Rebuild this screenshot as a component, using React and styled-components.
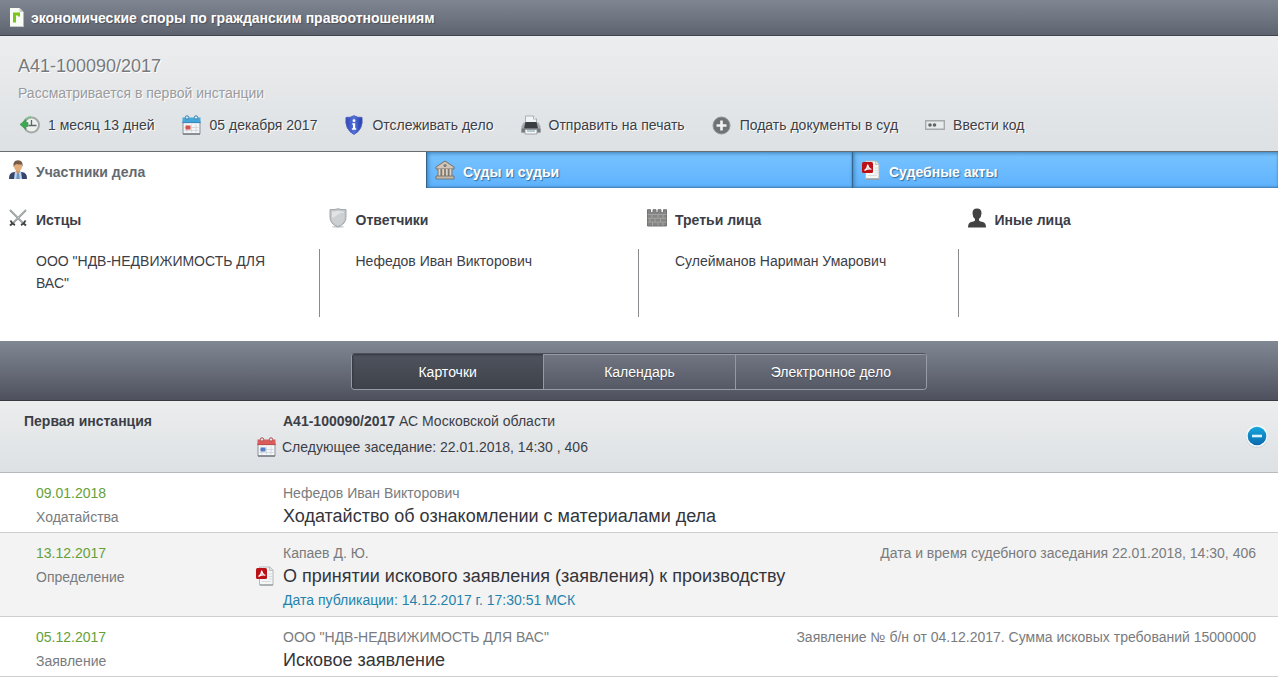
import React from "react";
import styled, { createGlobalStyle, css } from "styled-components";

const GlobalStyle = createGlobalStyle`
  *, *::before, *::after { box-sizing: border-box; }
  body {
    margin: 0;
    background: #fff;
    color: #3b3e47;
    font: 14px/20px Arial, "Liberation Sans", sans-serif;
  }
  h1, h2, h3, p, ul { margin: 0; padding: 0; font-size: inherit; }
  ul { list-style: none; }
  button { font: inherit; color: inherit; background: none; border: 0; padding: 0; cursor: pointer; }
  a { color: inherit; text-decoration: none; }
  svg { display: block; flex: none; }
`;

/* ---------- icons ---------- */

const CaseIcon = () => (
  <svg width="14" height="19" viewBox="0 0 14 19" aria-hidden="true">
    <path d="M0 0h9.500l4 4v15h-13.500z" fill="#f7fbf3" />
    <path d="M9.500 0l4 4h-4z" fill="#c3cdbd" />
    <path d="M0 18h13.500v1h-13.500z" fill="#c6c9cc" />
    <path d="M3 4.500h7v4h-2v-1h-2v7h-3z" fill="#7ac51d" />
  </svg>
);

const ClockIcon = () => (
  <svg width="20" height="20" viewBox="0 0 20 20" aria-hidden="true">
    <circle cx="11.500" cy="10" r="7.500" fill="#eef0ef" stroke="#a3aba7" strokeWidth="2" />
    <path d="M11.500 5v5.500h5M8.500 10.500h3" fill="none" stroke="#5d666a" strokeWidth="1.300" />
    <path d="M4 7q2-4.500 7-5" fill="none" stroke="#8bbd92" strokeWidth="2" />
    <path d="M0 9.500l6-5v3h2v4h-2v3z" fill="#3fa951" stroke="#2f9043" strokeWidth="0.600" />
  </svg>
);

const CalendarIcon = ({ head, dark, mark }) => (
  <svg width="19" height="20" viewBox="0 0 19 20" aria-hidden="true">
    <path d="M1 6h17v13h-17z" fill="#f4f6f7" stroke="#8d9296" />
    <path d="M.5 2.500h18v5.500h-18z" fill={head} />
    <path d="M.5 7.300h18v.8h-18z" fill={dark} />
    <path d="M5 9.500v8M9.500 9.500v8M14 9.500v8M2.500 12.500h14M2.500 15.500h14" stroke="#ccd4da" strokeWidth="0.800" />
    <path d="M3.500 10.500h5v4h-5z" fill={mark} />
    <circle cx="5" cy="2.500" r="1.700" fill="#e4e9ec" stroke={dark} />
    <circle cx="14" cy="2.500" r="1.700" fill="#e4e9ec" stroke={dark} />
    <path d="M1 19h17" stroke="#697077" strokeWidth="1.200" />
  </svg>
);

const InfoShieldIcon = () => (
  <svg width="20" height="20" viewBox="0 0 20 20" aria-hidden="true">
    <defs>
      <linearGradient id="shieldBlue" x2="1">
        <stop offset="0" stopColor="#2f45b5" />
        <stop offset=".5" stopColor="#5573dc" />
        <stop offset="1" stopColor="#2339a8" />
      </linearGradient>
    </defs>
    <path d="M10 .7q3.500 2.300 8 1.700q1.500 12-8 17q-9.500-5-8-17q4.500.6 8-1.700z" fill="url(#shieldBlue)" stroke="#4a60bb" />
    <circle cx="10" cy="5.700" r="1.400" fill="#fff" />
    <path d="M8.300 8.300h2.900v5h1v1.400h-4.300v-1.400h1.100v-3.600h-.7z" fill="#fff" />
  </svg>
);

const PrinterIcon = () => (
  <svg width="20" height="20" viewBox="0 0 20 20" aria-hidden="true">
    <path d="M4.500 8v-7h8l3 3v4z" fill="#f2f4f5" stroke="#9ba2a8" strokeWidth="0.800" />
    <path d="M12.500 1v3h3" fill="#fff" stroke="#9ba2a8" strokeWidth="0.800" />
    <path d="M2.500 7.500h15l2 4v6h-19v-6z" fill="#a4a8ac" />
    <path d="M4.500 7h11l1.500 6.500h-14z" fill="#3b3e42" />
    <path d="M.5 13.500h19v4h-19z" fill="#777b7f" />
    <path d="M4 14.500h12v4.500h-12z" fill="#f5f7f8" stroke="#8d959b" strokeWidth="0.800" />
    <path d="M6 16h8" stroke="#7c9aac" />
  </svg>
);

const PlusIcon = () => (
  <svg width="19" height="19" viewBox="0 0 19 19" aria-hidden="true">
    <circle cx="9.500" cy="9.500" r="8.500" fill="#6f7275" stroke="#919497" />
    <path d="M9.500 4.500v10M4.500 9.500h10" stroke="#f1f2f3" strokeWidth="2.600" />
  </svg>
);

const CodeIcon = () => (
  <svg width="20" height="10" viewBox="0 0 20 10" aria-hidden="true">
    <path d="M.7.700h18.600v8.600h-18.600z" fill="#e8ebec" stroke="#a6aaac" strokeWidth="1.400" />
    <circle cx="5" cy="5" r="1.800" fill="#606467" />
    <circle cx="9.500" cy="5" r="1.800" fill="#606467" />
  </svg>
);

const ManagerIcon = () => (
  <svg width="20" height="20" viewBox="0 0 20 20" aria-hidden="true">
    <path d="M1 19q-.5-6 5-7h8q5.500 1 5 7z" fill="#38456b" />
    <path d="M7 11h6l1 8h-8z" fill="#bdd5ed" />
    <path d="M9.200 12h1.600l1 7h-3.600z" fill="#6f94bd" />
    <path d="M8 9h4v3l-2 1.500l-2-1.500z" fill="#d09466" />
    <ellipse cx="10" cy="6.500" rx="4" ry="4.700" fill="#e2ac7b" />
    <path d="M5.500 7q-1-6.500 4.500-6.700q5.500.2 4.500 6.700l-1-2.500q-3.500 0-5-.5q-2 .5-3 3z" fill="#755a48" />
  </svg>
);

const CourtIcon = () => (
  <svg width="20" height="20" viewBox="0 0 20 20" aria-hidden="true">
    <path d="M10 1l9 6v2h-18v-2z" fill="#d0c7ba" stroke="#776f66" />
    <circle cx="10" cy="5.500" r="1.500" fill="#80776d" />
    <path d="M2.500 9h15v7h-15z" fill="#81776d" />
    <path d="M4.500 9v7M8.200 9v7M11.800 9v7M15.500 9v7" stroke="#ded6ca" strokeWidth="1.800" />
    <path d="M1 16h18v3h-18z" fill="#c3b9ac" stroke="#70695f" strokeWidth="0.800" />
  </svg>
);

const PdfIcon = () => (
  <svg width="18" height="20" viewBox="0 0 18 20" aria-hidden="true">
    <path d="M3.500 1h10.500l3 3v15h-13.500z" fill="#f4f5f5" stroke="#b4babd" />
    <path d="M13.500 1v3.500h3.500" fill="#dbe5df" stroke="#b4babd" strokeWidth="0.800" />
    <path d="M4 19h13" stroke="#868c90" />
    <path d="M6 15.500h9M13 8h3M13 10.500h3M13 13h3" stroke="#d8dcde" />
    <rect x="0" y="2" width="11" height="11" rx="1.500" fill="#bb1117" />
    <path d="M2.500 10.500q3-2 3.200-6q1 4.300 3.800 4.700q-3.500-.7-7 1.300z" fill="#f0b9bb" stroke="#fff" strokeWidth="1.100" />
  </svg>
);

const SwordsIcon = () => (
  <svg width="18" height="18" viewBox="0 0 18 18" aria-hidden="true">
    <path d="M1 1l13 13M17 1l-13 13" stroke="#8f9496" strokeWidth="2" />
    <path d="M1.500 1l12 12M16.500 1l-12 12" stroke="#d3d7d8" strokeWidth="0.700" />
    <path d="M1.500 11.500q1.200 3 4.500 4.500M16.500 11.500q-1.200 3-4.500 4.500M4 14l-3 2.500M14 14l3 2.500" fill="none" stroke="#404446" strokeWidth="2" />
  </svg>
);

const ShieldIcon = () => (
  <svg width="20" height="20" viewBox="0 0 20 20" aria-hidden="true">
    <ellipse cx="10" cy="18.700" rx="6" ry="1" fill="#d1d2d3" />
    <path d="M10 .8q4 1.200 8 .8v7.400q0 7-8 10q-8-3-8-10v-7.400q4 .4 8-.8z" fill="#c6c9cc" stroke="#a2a5a8" />
    <path d="M10 2.800q3 1 6 .7v5.200q0 5.500-6 8q-6-2.500-6-8v-5.200q3 .3 6-.7z" fill="#e1e3e5" />
    <path d="M4 10q3-1 6-3.500t6-1.500v4q0 5.500-6 7.800q-5-2-6-6.800z" fill="#cdd0d3" />
  </svg>
);

const WallIcon = () => (
  <svg width="20" height="18" viewBox="0 0 20 18" aria-hidden="true">
    <path d="M.5.700h3v3h2.500v-3h3v3h2v-3h3v3h2.500v-3h3v16.300h-19z" fill="#868685" stroke="#737373" />
    <path d="M.5 5.500h19M.5 9.300h19M.5 13.100h19M5 5.500v3.800M11 5.500v3.800M16 5.500v3.800M3 9.300v3.800M8 9.300v3.800M13.500 9.300v3.800M5.500 13.100v3.700M11 13.100v3.700M16 13.100v3.700" stroke="#aaaaa9" strokeWidth="0.800" />
  </svg>
);

const PersonIcon = () => (
  <svg width="18" height="20" viewBox="0 0 18 20" aria-hidden="true">
    <path d="M9 .5q4.700 0 4.500 5q-.2 4-2.500 5.500v1.500q1 1 4 1.500q3 .8 3 5.500h-18q0-4.700 3-5.500q3-.5 4-1.500v-1.500q-2.300-1.500-2.500-5.500q-.2-5 4.500-5z" fill="#424242" />
  </svg>
);

const MinusIcon = () => (
  <svg width="24" height="24" viewBox="0 0 24 24" aria-hidden="true">
    <defs>
      <linearGradient id="minusBlue" x2="0" y2="1">
        <stop offset="0" stopColor="#17a7dc" />
        <stop offset="1" stopColor="#0869ae" />
      </linearGradient>
    </defs>
    <circle cx="12" cy="12.800" r="11" fill="#c9ced3" />
    <circle cx="12" cy="12" r="10.800" fill="#f3f9fc" />
    <circle cx="12" cy="12" r="9.300" fill="url(#minusBlue)" />
    <path d="M7 10.700h10v2.600h-10z" fill="#d9f4ff" />
  </svg>
);

/* ---------- layout ---------- */

const panel = css`
  background: linear-gradient(#ecedee, #dde1e4);
`;

const TitleBar = styled.header`
  display: flex;
  align-items: center;
  gap: 7px;
  min-height: 36px;
  padding: 0 10px;
  border-bottom: 1px solid #40434c;
  background: linear-gradient(#808691, #5d6470);
  color: #fff;
  font-weight: bold;
  text-shadow: 1px 1px 1px #4a4e58;
`;

const CaseInfo = styled.section`
  ${panel}
  padding: 18px 18px 16px;
  border-bottom: 1px solid #686c70;
  text-shadow: 1px 1px 0 #fff;
`;

const CaseNumber = styled.h1`
  color: #777a7d;
  font-size: 18px;
  font-weight: normal;
  line-height: 24px;
`;

const CaseStatus = styled.p`
  margin-top: 5px;
  color: #999b9e;
`;

const Toolbar = styled.div`
  display: flex;
  flex-wrap: wrap;
  gap: 8px 27px;
  margin-top: 12px;
  padding-left: 2px;
`;

const ToolButton = styled.button`
  display: flex;
  align-items: center;
  gap: 8px;
  height: 20px;
  text-shadow: inherit;
  white-space: nowrap;
`;

const IconBox = styled.span`
  display: flex;
  justify-content: center;
  width: 20px;
`;

const Tabs = styled.div`
  display: grid;
  grid-template-columns: repeat(3, 1fr);
`;

const Tab = styled.button`
  display: flex;
  align-items: center;
  gap: 8px;
  height: 36px;
  padding: 0 8px 0 9px;
  font-weight: bold;
  text-align: left;
  ${({ $active }) =>
    $active
      ? css`
          padding-left: 8px;
          background: #fff;
          color: #646971;
        `
      : css`
          background: linear-gradient(#79c3ff, #5eb2fd);
          box-shadow: inset 1px 0 0 #32658e, inset 2px 1px 4px #397cb2, inset 0 -1px 2px #4182b8;
          color: #fff;
          text-shadow: 1px 1px 1px #356d9c;
        `}
`;

const Label = styled.span`
  padding-top: 4px;
`;

const Parties = styled.section`
  display: grid;
  grid-template-columns: repeat(4, 1fr);
  padding: 20px 0 24px;
`;

const Party = styled.div`
  display: flex;
  flex-direction: column;
`;

const PartyHeading = styled.h2`
  display: flex;
  align-items: center;
  gap: 8px;
  height: 20px;
  margin-bottom: 21px;
  padding-left: 8px;
`;

const PartyNames = styled.ul`
  flex: 1;
  min-height: 68px;
  padding: 1px 36px 0;
  line-height: 22px;
  ${Party}:not(:last-child) > & { border-right: 1px solid #8a8b8f; }
`;

const ViewBar = styled.nav`
  display: flex;
  justify-content: center;
  padding: 12px 0 10px;
  border-bottom: 1px solid #393943;
  background: linear-gradient(#808894, #4e515d);
`;

const Segments = styled.div`
  display: grid;
  grid-template-columns: repeat(3, 1fr);
  width: 576px;
  max-width: 100%;
  height: 37px;
  border: 1px solid #969ba6;
  border-top-color: #4c505a;
  border-radius: 4px;
  overflow: hidden;
`;

const Segment = styled.button`
  padding-top: 1px;
  background: linear-gradient(#717682, #555965);
  box-shadow: inset 0 1px 0 #969ca6;
  color: #fff;
  text-shadow: 0 1px 1px #41444e;
  & + & { border-left: 1px solid #9499a3; }
  ${({ $active }) =>
    $active &&
    css`
      background: linear-gradient(#4f535d, #3e424b);
      box-shadow: inset 1px 1px 2px #32353c;
    `}
`;

const Instance = styled.section`
  ${panel}
  display: grid;
  grid-template-columns: 256px 1fr auto;
  padding: 10px 9px 15px 0;
  border-bottom: 1px solid #b6babd;
`;

const InstanceName = styled.h2`
  padding-left: 24px;
`;

const CourtLine = styled.p`
  padding-left: 27px;
`;

const Hearing = styled.p`
  display: flex;
  align-items: center;
  gap: 6px;
  margin-top: 6px;
  padding-left: 1px;
`;

const Collapse = styled.button`
  align-self: center;
  padding-top: 4px;
`;

const Event = styled.li`
  display: grid;
  grid-template-columns: 256px 1fr auto;
  padding: 10px 22px 3px 0;
  border-bottom: 1px solid #cfcfd0;
  background: ${({ $shaded }) => ($shaded ? "#f3f3f3" : "#fff")};
  color: #797b7e;
`;

const EventKind = styled.div`
  padding-left: 36px;
`;

const EventDate = styled.time`
  display: block;
  color: #65a138;
`;

const EventType = styled.p`
  margin-top: 2px;
  line-height: 24px;
`;

const EventBody = styled.div`
  display: grid;
  grid-template-columns: 27px 1fr;
  align-content: start;
  padding-bottom: 1px;
  & > :not(span) { grid-column: 2; }
`;

const PdfSlot = styled.span`
  display: flex;
  align-items: center;
  height: 25px;
`;

const EventTitle = styled.h3`
  padding-top: 1px;
  color: #34353b;
  font-size: 18px;
  font-weight: normal;
  line-height: 24px;
`;

const Published = styled.p`
  color: #1f83ad;
  line-height: 24px;
`;

const tools = [
  ["1 месяц 13 дней", <ClockIcon />],
  ["05 декабря 2017", <CalendarIcon head="#45a6dc" dark="#347fae" mark="#d55349" />],
  ["Отслеживать дело", <InfoShieldIcon />],
  ["Отправить на печать", <PrinterIcon />],
  ["Подать документы в суд", <PlusIcon />],
  ["Ввести код", <CodeIcon />],
];

const tabs = [
  ["Участники дела", <ManagerIcon />],
  ["Суды и судьи", <CourtIcon />],
  ["Судебные акты", <PdfIcon />],
];

const parties = [
  ["Истцы", <SwordsIcon />, ['ООО "НДВ-НЕДВИЖИМОСТЬ ДЛЯ ВАС"']],
  ["Ответчики", <ShieldIcon />, ["Нефедов Иван Викторович"]],
  ["Третьи лица", <WallIcon />, ["Сулейманов Нариман Умарович"]],
  ["Иные лица", <PersonIcon />, []],
];

const views = ["Карточки", "Календарь", "Электронное дело"];

const events = [
  {
    date: "09.01.2018",
    type: "Ходатайства",
    by: "Нефедов Иван Викторович",
    title: "Ходатайство об ознакомлении с материалами дела",
  },
  {
    date: "13.12.2017",
    type: "Определение",
    by: "Капаев Д. Ю.",
    title: "О принятии искового заявления (заявления) к производству",
    pdf: true,
    published: "Дата публикации: 14.12.2017 г. 17:30:51 МСК",
    note: "Дата и время судебного заседания 22.01.2018, 14:30, 406",
  },
  {
    date: "05.12.2017",
    type: "Заявление",
    by: 'ООО "НДВ-НЕДВИЖИМОСТЬ ДЛЯ ВАС"',
    title: "Исковое заявление",
    note: "Заявление № б/н от 04.12.2017. Сумма исковых требований 15000000",
  },
];

export default function App() {
  return (
    <>
      <GlobalStyle />
      <TitleBar>
        <CaseIcon />
        экономические споры по гражданским правоотношениям
      </TitleBar>
      <main>
        <CaseInfo>
          <CaseNumber>А41-100090/2017</CaseNumber>
          <CaseStatus>Рассматривается в первой инстанции</CaseStatus>
          <Toolbar>
            {tools.map(([label, icon]) => (
              <ToolButton key={label}>
                <IconBox>{icon}</IconBox>
                {label}
              </ToolButton>
            ))}
          </Toolbar>
        </CaseInfo>

        <Tabs role="tablist">
          {tabs.map(([label, icon], i) => (
            <Tab key={label} role="tab" aria-selected={i === 0} $active={i === 0}>
              <IconBox>{icon}</IconBox>
              <Label>{label}</Label>
            </Tab>
          ))}
        </Tabs>

        <Parties>
          {parties.map(([label, icon, names]) => (
            <Party key={label}>
              <PartyHeading>
                <IconBox>{icon}</IconBox>
                <Label>{label}</Label>
              </PartyHeading>
              <PartyNames>
                {names.map((name) => (
                  <li key={name}>{name}</li>
                ))}
              </PartyNames>
            </Party>
          ))}
        </Parties>

        <ViewBar>
          <Segments>
            {views.map((view, i) => (
              <Segment key={view} aria-pressed={i === 0} $active={i === 0}>
                {view}
              </Segment>
            ))}
          </Segments>
        </ViewBar>

        <Instance>
          <InstanceName>Первая инстанция</InstanceName>
          <div>
            <CourtLine>
              <b>А41-100090/2017</b> АС Московской области
            </CourtLine>
            <Hearing>
              <CalendarIcon head="#dc5b5b" dark="#a94b4b" mark="#567fc4" />
              Следующее заседание: 22.01.2018, 14:30 , 406
            </Hearing>
          </div>
          <Collapse aria-label="Свернуть">
            <MinusIcon />
          </Collapse>
        </Instance>

        <ul>
          {events.map((event, i) => (
            <Event key={event.date} $shaded={i % 2 === 1}>
              <EventKind>
                <EventDate>{event.date}</EventDate>
                <EventType>{event.type}</EventType>
              </EventKind>
              <EventBody>
                <p>{event.by}</p>
                {event.pdf && (
                  <PdfSlot>
                    <PdfIcon />
                  </PdfSlot>
                )}
                <EventTitle>{event.pdf ? <a href="#document">{event.title}</a> : event.title}</EventTitle>
                {event.published && <Published>{event.published}</Published>}
              </EventBody>
              {event.note && <p>{event.note}</p>}
            </Event>
          ))}
        </ul>
      </main>
    </>
  );
}
